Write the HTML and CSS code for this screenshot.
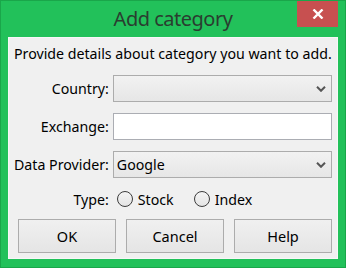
FILE: index.html
```html
<!DOCTYPE html>
<html lang="en">

<head>
    <meta charset="UTF-8">
    <title>Add category</title>
    <link rel="stylesheet" href="styles.css">
</head>

<body>
    <div class="window">
        <div class="titlebar">
            <span class="title">Add category</span>
            <button type="button" class="close">
                <svg width="12" height="10" viewBox="0 0 12 10">
                    <path d="M1.5 0.5 L10.5 9.5 M10.5 0.5 L1.5 9.5" stroke="#fff" stroke-width="2.4" />
                </svg>
            </button>
        </div>
        <div class="panel">
            <p class="intro">Provide details about category you want to add.</p>
            <div class="form">
                <label class="label">Country:</label>
                <div class="select">
                    <span></span>
                    <svg class="chev" width="10" height="6" viewBox="0 0 10 6">
                        <path d="M1 0.8 L5 4.8 L9 0.8" stroke="#555" stroke-width="2" fill="none" />
                    </svg>
                </div>

                <label class="label">Exchange:</label>
                <div class="input"></div>

                <label class="label">Data Provider:</label>
                <div class="select">
                    <span>Google</span>
                    <svg class="chev" width="10" height="6" viewBox="0 0 10 6">
                        <path d="M1 0.8 L5 4.8 L9 0.8" stroke="#555" stroke-width="2" fill="none" />
                    </svg>
                </div>

                <label class="label">Type:</label>
                <div class="radios">
                    <span class="radio"><i></i>Stock</span>
                    <span class="radio"><i></i>Index</span>
                </div>
            </div>
            <div class="buttons">
                <button type="button" class="btn">OK</button>
                <button type="button" class="btn">Cancel</button>
                <button type="button" class="btn">Help</button>
            </div>
        </div>
    </div>
</body>

</html>
```
FILE: styles.css
```css
html,
body {
    margin: 0;
    padding: 0;
}

body {
    font-family: 'Noto Sans', 'Open Sans', sans-serif;
    font-size: 14.2px;
    color: #000;
}

.window {
    width: 346px;
    height: 268px;
    box-sizing: border-box;
    border: 1px solid #1aa64a;
    background-color: #22c15a;
    display: flex;
    flex-direction: column;
}

.titlebar {
    height: 36px;
    position: relative;
    display: flex;
    align-items: center;
    justify-content: center;
}

.title {
    font-size: 20px;
    letter-spacing: -0.5px;
    color: #2a3d30;
    margin-top: -2px;
}

.close {
    position: absolute;
    top: 0;
    right: 7px;
    width: 41px;
    height: 26px;
    border: none;
    padding: 0;
    background-color: #c75050;
    display: flex;
    align-items: center;
    justify-content: center;
}

.panel {
    margin: 0 7px;
    height: 222px;
    box-sizing: border-box;
    background-color: #f0f0f0;
    border: 1px solid #f7f7f7;
    padding: 0 5px 0 5px;
}

.intro {
    margin: 5px 0 0 0;
    line-height: 22px;
    white-space: nowrap;
}

.form {
    margin-top: 10px;
    display: grid;
    grid-template-columns: max-content 1fr;
    column-gap: 4px;
    row-gap: 11px;
    align-items: center;
}

.label {
    text-align: right;
    white-space: nowrap;
}

.select,
.input {
    height: 27px;
    box-sizing: border-box;
    border: 1px solid #acacac;
}

.select {
    background: linear-gradient(#f2f2f2, #e6e6e6);
    display: flex;
    align-items: center;
    justify-content: space-between;
    padding: 0 5px 0 3px;
}

.select:last-of-type {
    height: 28px;
}

.chev {
    display: block;
}

.input {
    background-color: #fff;
    border-color: #abadb3;
}

.radios {
    display: flex;
    gap: 20px;
    align-items: center;
    height: 20px;
    padding-left: 4px;
}

.radio {
    display: flex;
    align-items: center;
    gap: 5px;
}

.radio i {
    width: 16px;
    height: 16px;
    box-sizing: border-box;
    border: 1px solid #3c3c3c;
    border-radius: 50%;
    background: linear-gradient(#f4f4f4, #e4e4e4);
}

.buttons {
    margin: 10px 0 0 4px;
    display: flex;
    gap: 10px;
}

.btn {
    width: 98px;
    height: 34px;
    border: 1px solid #acacac;
    background: linear-gradient(#f0f0f0, #e5e5e5);
    font-family: inherit;
    font-size: 14.5px;
    color: #000;
    padding: 0;
}
```
